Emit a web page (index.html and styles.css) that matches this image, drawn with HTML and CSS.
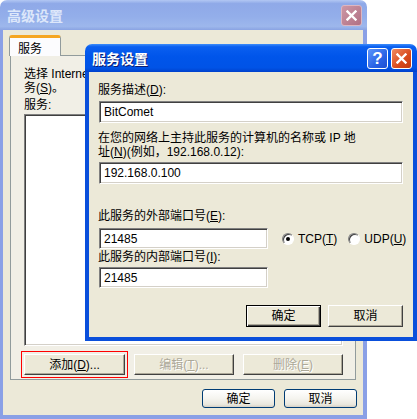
FILE: index.html
```html
<!DOCTYPE html>
<html lang="zh-CN">
<head>
    <meta charset="UTF-8">
    <meta name="viewport" content="width=device-width, initial-scale=1.0">
    <title>高级设置</title>
    <link rel="stylesheet" href="styles.css">
</head>
<body>
    <div class="desk">
        <div class="win outer">
            <div class="titlebar dim">
                <span class="title-text">高级设置</span>
                <span class="tbtn close">
                    <svg width="11" height="11" viewBox="0 0 11 11"><path d="M1.5 1.5L9.5 9.5M9.5 1.5L1.5 9.5" stroke="#fff" stroke-width="2.4" stroke-linecap="square"/></svg>
                </span>
            </div>
            <div class="frame">
                <div class="tabs">
                    <div class="tab">服务</div>
                </div>
                <div class="panel">
                    <p class="intro">选择 Internet 用户可以访问的运行于您网络上的服<br>务(<u>S</u>)。</p>
                    <div class="caption">服务:</div>
                    <div class="listbox"></div>
                    <div class="btn-row">
                        <button class="cbtn marked">添加(<u>D</u>)...</button>
                        <button class="cbtn" disabled>编辑(<u>T</u>)...</button>
                        <button class="cbtn" disabled>删除(<u>E</u>)</button>
                    </div>
                </div>
                <div class="actions">
                    <button class="xbtn">确定</button>
                    <button class="xbtn">取消</button>
                </div>
            </div>
        </div>

        <div class="win inner">
            <div class="titlebar active">
                <span class="title-text">服务设置</span>
                <span class="tbtns">
                    <span class="tbtn help">?</span>
                    <span class="tbtn close">
                        <svg width="11" height="11" viewBox="0 0 11 11"><path d="M1.5 1.5L9.5 9.5M9.5 1.5L1.5 9.5" stroke="#fff" stroke-width="2.4" stroke-linecap="square"/></svg>
                    </span>
                </span>
            </div>
            <div class="frame form">
                <label class="fl first">服务描述(<u>D</u>):</label>
                <div class="field">BitComet</div>

                <label class="fl two">在您的网络上主持此服务的计算机的名称或 IP 地<br>址(<u>N</u>)(例如，192.168.0.12):</label>
                <div class="field">192.168.0.100</div>

                <label class="fl ext">此服务的外部端口号(<u>E</u>):</label>
                <div class="port-row">
                    <div class="field port">21485</div>
                    <div class="radios">
                        <span class="radio on"></span><span class="rlabel">TCP(<u>T</u>)</span>
                        <span class="radio"></span><span class="rlabel">UDP(<u>U</u>)</span>
                    </div>
                </div>

                <label class="fl int">此服务的内部端口号(<u>I</u>):</label>
                <div class="field port">21485</div>

                <div class="form-actions">
                    <button class="cbtn default">确定</button>
                    <button class="cbtn">取消</button>
                </div>
            </div>
        </div>
    </div>
</body>
</html>
```

FILE: styles.css
```css
body {
    margin: 0;
    background-color: #fff;
    font-family: "Liberation Sans", "Noto Sans CJK SC", sans-serif;
    font-size: 12px;
    line-height: 12px;
    color: #000;
}
u {
    text-decoration: underline;
}
.desk {
    position: relative;
    width: 417px;
    height: 419px;
    overflow: hidden;
}
.win {
    box-sizing: border-box;
    display: flex;
    flex-direction: column;
}
.outer {
    width: 367px;
    height: 419px;
}
.inner {
    position: absolute;
    left: 85px;
    top: 44px;
    width: 332px;
    height: 297px;
}
.titlebar {
    display: flex;
    align-items: center;
    justify-content: space-between;
    border-radius: 7px 7px 0 0;
    padding: 0 5px 0 7px;
    flex: none;
}
.titlebar.dim {
    height: 30px;
    background: linear-gradient(#b2c7f3 0, #8fa9e8 12%, #93aeea 55%, #9db7ec 88%, #8aa3e3 100%);
}
.titlebar.active {
    height: 28px;
    background: linear-gradient(#3d8dfa 0, #0a5ff0 10%, #0055ea 45%, #0053e6 85%, #0041cc 100%);
}
.title-text {
    font-family: "Noto Sans CJK SC", sans-serif;
    font-size: 14px;
    font-weight: bold;
    line-height: 16px;
}
.dim .title-text {
    color: #dde7fa;
}
.active .title-text {
    color: #fff;
    text-shadow: 1px 1px 0 #0a1d73;
}
.tbtns {
    display: flex;
    gap: 3px;
}
.tbtn {
    box-sizing: border-box;
    width: 21px;
    height: 21px;
    border: 1px solid #fff;
    border-radius: 3px;
    display: flex;
    align-items: center;
    justify-content: center;
}
.dim .tbtn.close {
    background: linear-gradient(135deg, #cc97a6, #b17084);
    border-color: #dcb6c1;
}
.active .tbtn.close {
    background: linear-gradient(135deg, #f08b62, #d8491c 60%, #c23b12);
}
.tbtn.help {
    background: linear-gradient(135deg, #5b95fb, #2a63e6 60%, #1d4fd2);
    color: #fff;
    font-weight: bold;
    font-size: 17px;
    line-height: 17px;
}
.frame {
    flex: 1;
    background-color: #ece9d8;
    display: flex;
    flex-direction: column;
}
.outer .frame {
    border: solid #8aa0e6;
    border-width: 0 4px 4px 3px;
}
.inner .frame {
    border: solid #0a4fdb;
    border-width: 0 4px 4px 4px;
}
.tabs {
    display: flex;
    padding: 5px 0 0 6px;
}
.tab {
    box-sizing: border-box;
    width: 52px;
    height: 21px;
    margin-bottom: -1px;
    padding: 5px 0 0 8px;
    background-color: #fcfcfe;
    border: 1px solid #919b9c;
    border-bottom: none;
    border-top: 3px solid #f5a623;
    border-radius: 3px 3px 0 0;
    position: relative;
    z-index: 1;
}
.panel {
    box-sizing: border-box;
    height: 325px;
    margin: 0 7px;
    padding: 11px 12px 0 13px;
    border: 1px solid #919b9c;
    background-color: #f1efe6;
}
.intro {
    margin: 0;
    line-height: 14px;
}
.caption {
    margin-top: 4px;
}
.listbox {
    box-sizing: border-box;
    height: 232px;
    margin-top: 3px;
    width: 319px;
    background-color: #fff;
    border-top: 1px solid #808080;
    border-left: 1px solid #808080;
    border-right: 1px solid #fff;
    border-bottom: 1px solid #fff;
    box-shadow: inset 1px 1px 0 #404040, inset -1px -1px 0 #d4d0c8;
}
.btn-row {
    display: grid;
    grid-template-columns: 101px 100px 100px;
    gap: 9px;
    margin-top: 8px;
    width: 319px;
}
button {
    font-family: inherit;
    font-size: 12px;
    line-height: 12px;
    color: #000;
    padding: 0;
    cursor: default;
}
.cbtn {
    box-sizing: border-box;
    height: 21px;
    background-color: #ece9d8;
    border-top: 1px solid #fff;
    border-left: 1px solid #fff;
    border-right: 1px solid #404040;
    border-bottom: 1px solid #404040;
    box-shadow: inset -1px -1px 0 #aca899;
}
.cbtn:disabled {
    color: #aca899;
    text-shadow: 1px 1px 0 #fff;
}
.cbtn.marked {
    outline: 1px solid #f00;
    outline-offset: 2px;
}
.cbtn.default {
    border: 1px solid #000;
    box-shadow: inset 1px 1px 0 #fff, inset -1px -1px 0 #404040, inset -2px -2px 0 #aca899;
}
.actions {
    display: flex;
    justify-content: flex-end;
    gap: 9px;
    padding: 9px 6px 0 0;
}
.xbtn {
    box-sizing: border-box;
    width: 73px;
    height: 19px;
    border: 1px solid #003c74;
    border-radius: 3px;
    background: linear-gradient(#ffffff 0, #f5f4ef 50%, #e9e7dd 85%, #d6d0c5 100%);
}
.form {
    padding: 12px 10px 10px 10px;
}
.fl {
    display: block;
    margin-left: -1px;
}
.two {
    margin-top: 8px;
    line-height: 14px;
}
.ext {
    margin-top: 26px;
}
.int {
    margin-top: 2px;
}
.field {
    box-sizing: border-box;
    height: 22px;
    margin-top: 5px;
    padding: 0 4px;
    display: flex;
    align-items: center;
    background-color: #fff;
    border-top: 1px solid #808080;
    border-left: 1px solid #808080;
    border-right: 1px solid #fff;
    border-bottom: 1px solid #fff;
    box-shadow: inset 1px 1px 0 #404040, inset -1px -1px 0 #d4d0c8;
}
.two + .field {
    margin-top: 3px;
}
.field.port {
    flex: none;
    width: 169px;
    height: 21px;
}
.int + .field.port {
    margin-top: 4px;
}
.port-row {
    display: flex;
    align-items: center;
    margin-top: 6px;
}
.port-row .field {
    margin-top: 0;
}
.radios {
    display: flex;
    align-items: center;
    margin-left: 14px;
    white-space: nowrap;
}
.radio {
    flex: none;
    box-sizing: border-box;
    width: 12px;
    height: 12px;
    border-radius: 50%;
    background-color: #fff;
    border: 1px solid;
    border-color: #808080 #fff #fff #808080;
    box-shadow: inset 1px 1px 0 #404040;
    display: flex;
    align-items: center;
    justify-content: center;
    margin-right: 4px;
}
.radio.on::after {
    content: "";
    width: 4px;
    height: 4px;
    border-radius: 50%;
    background-color: #000;
}
.rlabel {
    margin-right: 11px;
}
.rlabel:last-child {
    margin-right: 0;
}
.form-actions {
    display: flex;
    justify-content: flex-end;
    gap: 7px;
    margin-top: 17px;
}
.form-actions .cbtn {
    width: 75px;
    height: 22px;
}
```
